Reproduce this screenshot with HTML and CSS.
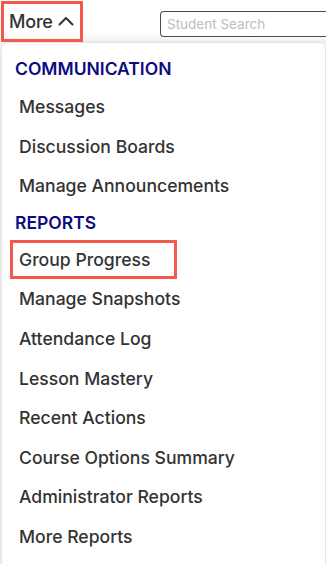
FILE: index.html
```html
<!DOCTYPE html>
<html lang="en">
<head>
<meta charset="utf-8">
<title>More menu</title>
<link rel="stylesheet" href="styles.css">
</head>
<body>
<div class="page">
  <header class="topbar">
    <button class="more-btn" type="button">
      <span>More</span>
      <svg class="chev" width="16" height="10" viewBox="0 0 16 10" aria-hidden="true"><path d="M1.5 8.5 L8 2 L14.5 8.5" fill="none" stroke="#333" stroke-width="2" stroke-linecap="round" stroke-linejoin="round"/></svg>
    </button>
    <input class="search" type="text" placeholder="Student Search">
  </header>
  <nav class="menu">
    <div class="menu-head">COMMUNICATION</div>
    <a class="menu-item">Messages</a>
    <a class="menu-item">Discussion Boards</a>
    <a class="menu-item">Manage Announcements</a>
    <div class="menu-head">REPORTS</div>
    <a class="menu-item is-marked">Group Progress</a>
    <a class="menu-item">Manage Snapshots</a>
    <a class="menu-item">Attendance Log</a>
    <a class="menu-item">Lesson Mastery</a>
    <a class="menu-item">Recent Actions</a>
    <a class="menu-item">Course Options Summary</a>
    <a class="menu-item">Administrator Reports</a>
    <a class="menu-item">More Reports</a>
  </nav>
</div>
</body>
</html>
```
FILE: styles.css
```css
* { box-sizing: border-box; }
html, body { margin: 0; padding: 0; }
body {
  background: #fff;
  font-family: Inter, "Liberation Sans", sans-serif;
  color: #333;
  overflow: hidden;
}
.page {
  width: 326px;
  height: 564px;
  overflow: hidden;
  background: linear-gradient(#fff 0, #fff 30px, #f3f3f3 43px, #fafafa 43px);
}
.topbar {
  height: 43px;
  display: flex;
  align-items: flex-start;
}
.more-btn {
  margin: 1px 0 0 1px;
  width: 82px;
  height: 41px;
  border: 3px solid #f35a4c;
  background: transparent;
  display: flex;
  align-items: center;
  gap: 5px;
  padding: 0 0 0 5px;
  font-family: inherit;
  font-size: 18px;
  font-weight: 500;
  color: #333;
  letter-spacing: -0.2px;
}
.chev { margin-top: -1px; }
.search {
  margin: 11px 0 0 77px;
  flex: 1;
  min-width: 0;
  height: 26px;
  border: 1px solid #4a4a4a;
  border-right: none;
  border-radius: 4px 0 0 4px;
  padding: 0 6px;
  font-family: inherit;
  font-size: 13.5px;
  background: #fff;
}
.search::placeholder { color: #bdbdbd; }
.menu {
  margin-left: 2px;
  width: 323px;
  height: 540px;
  background: #fff;
  border-radius: 6px 6px 0 0;
  box-shadow: 0 1px 6px rgba(0,0,0,0.18);
  padding-top: 11px;
  display: flex;
  flex-direction: column;
}
.menu-head {
  height: 34px;
  line-height: 34px;
  padding-left: 13px;
  font-size: 17.5px;
  font-weight: 600;
  color: #0c0c82;
}
.menu-head:first-child { height: 33px; line-height: 30px; }
.menu-item {
  display: block;
  height: 39.6px;
  line-height: 39.6px;
  padding-left: 17px;
  font-size: 17.6px;
  font-weight: 470;
  color: #333;
}
.menu-item.is-marked {
  margin-left: 8px;
  width: 167px;
  padding-left: 6px;
  border: 3px solid #f35a4c;
  line-height: 33.6px;
}
```
